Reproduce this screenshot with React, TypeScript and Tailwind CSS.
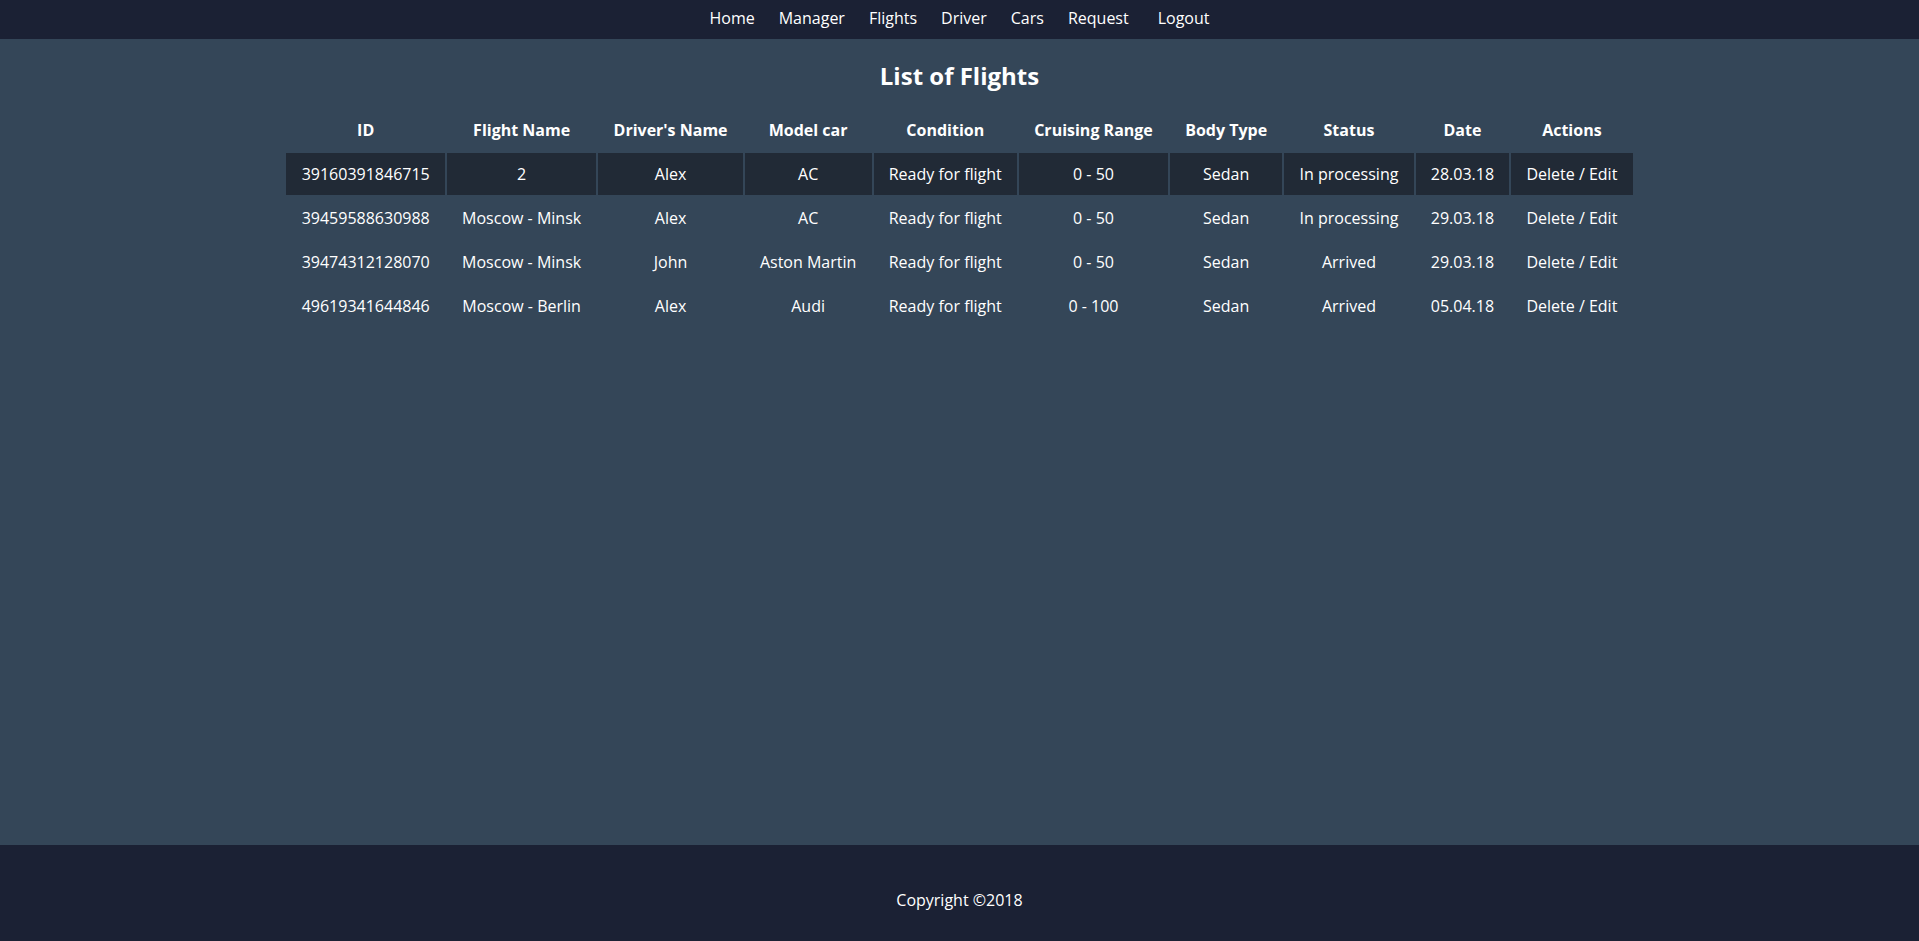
const flights = [
  { id: '39160391846715', name: '2', driver: 'Alex', model: 'AC', condition: 'Ready for flight', range: '0 - 50', body: 'Sedan', status: 'In processing', date: '28.03.18' },
  { id: '39459588630988', name: 'Moscow - Minsk', driver: 'Alex', model: 'AC', condition: 'Ready for flight', range: '0 - 50', body: 'Sedan', status: 'In processing', date: '29.03.18' },
  { id: '39474312128070', name: 'Moscow - Minsk', driver: 'John', model: 'Aston Martin', condition: 'Ready for flight', range: '0 - 50', body: 'Sedan', status: 'Arrived', date: '29.03.18' },
  { id: '49619341644846', name: 'Moscow - Berlin', driver: 'Alex', model: 'Audi', condition: 'Ready for flight', range: '0 - 100', body: 'Sedan', status: 'Arrived', date: '05.04.18' },
];

const headers = ['ID', 'Flight Name', "Driver's Name", 'Model car', 'Condition', 'Cruising Range', 'Body Type', 'Status', 'Date', 'Actions'];

const navLinks = ['Home', 'Manager', 'Flights', 'Driver', 'Cars', 'Request'];

export default function App() {
  return (
    <div className="flex min-h-screen flex-col bg-[#344658] text-white font-['Open_Sans',sans-serif]">
      {/* top navigation */}
      <nav className="flex h-[39px] items-center justify-center bg-[#1b2134] pb-[3px] text-[16px]">
        <ul className="flex items-center gap-[24px]">
          {navLinks.map((link) => (
            <li key={link}>
              <a href="#" className="text-white">{link}</a>
            </li>
          ))}
          <li className="ml-[5px]">
            <a href="#" className="text-white">Logout</a>
          </li>
        </ul>
      </nav>

      <main className="flex flex-1 flex-col items-center">
        <h2 className="mt-[24px] text-[24px] font-bold leading-[26px]">List of Flights</h2>

        <table className="mt-[18px] border-separate border-spacing-[2px] text-center text-[16px] leading-6">
          <thead>
            <tr>
              {headers.map((h) => (
                <th key={h} className="px-[15.2px] py-[9px] font-bold whitespace-nowrap">{h}</th>
              ))}
            </tr>
          </thead>
          <tbody>
            {flights.map((f, i) => (
              <tr key={f.id} className={i === 0 ? 'bg-[#212a36]' : ''}>
                <td className="px-[15.2px] py-[9px] whitespace-nowrap">{f.id}</td>
                <td className="px-[15.2px] py-[9px] whitespace-nowrap">{f.name}</td>
                <td className="px-[15.2px] py-[9px] whitespace-nowrap">{f.driver}</td>
                <td className="px-[15.2px] py-[9px] whitespace-nowrap">{f.model}</td>
                <td className="px-[15.2px] py-[9px] whitespace-nowrap">{f.condition}</td>
                <td className="px-[15.2px] py-[9px] whitespace-nowrap">{f.range}</td>
                <td className="px-[15.2px] py-[9px] whitespace-nowrap">{f.body}</td>
                <td className="px-[15.2px] py-[9px] whitespace-nowrap">{f.status}</td>
                <td className="px-[15.2px] py-[9px] whitespace-nowrap">{f.date}</td>
                <td className="px-[15.2px] py-[9px] whitespace-nowrap">
                  <a href="#" className="text-white">Delete</a> / <a href="#" className="text-white">Edit</a>
                </td>
              </tr>
            ))}
          </tbody>
        </table>
      </main>

      <footer className="h-[96px] bg-[#1b2134] pt-[43px] text-center text-[16px] leading-6">
        Copyright ©2018
      </footer>
    </div>
  );
}
